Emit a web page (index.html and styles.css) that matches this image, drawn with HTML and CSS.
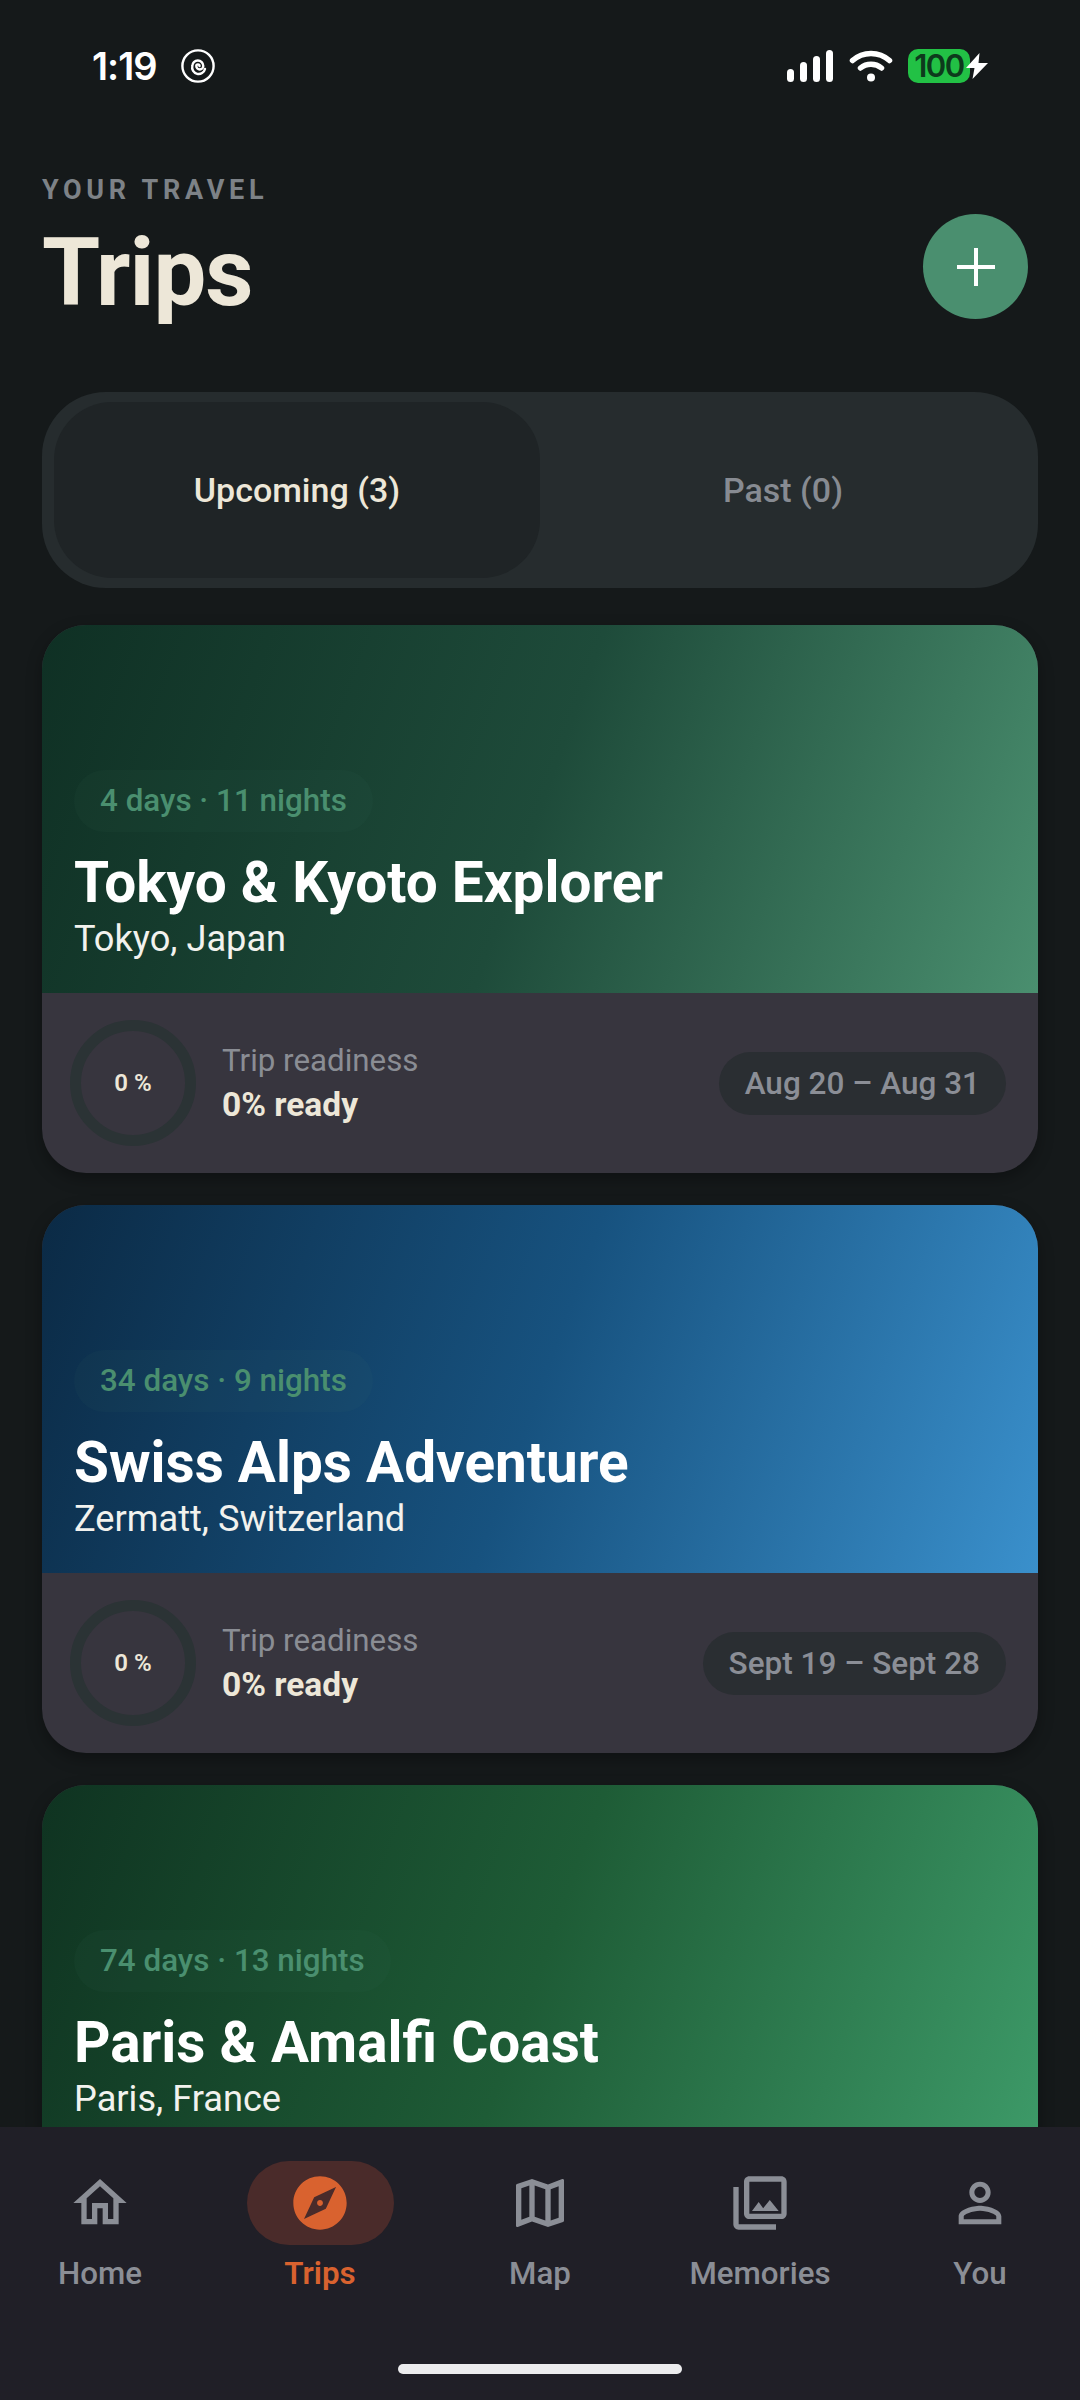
FILE: index.html
```html
<!DOCTYPE html>
<html lang="en">

<head>
  <meta charset="UTF-8" />
  <meta name="viewport" content="width=device-width, initial-scale=1.0" />
  <title>Trips</title>
  <link rel="stylesheet" href="styles.css">
</head>

<body>

  <div class="screen">
    <div class="status-bar">
      <div class="status-left">
        <span class="clock">1:19</span>
        <svg class="spiral" viewBox="0 0 34 34" fill="none" stroke="#fff" stroke-width="2.4" stroke-linecap="round">
          <circle cx="17" cy="17" r="15.6" />
          <path d="M18.5 17A1.6 1.6 0 0 0 15.300 17A3.500 3.500 0 0 0 22.300 17A5.500 5.500 0 0 0 11.300 17A6.400 6.400 0 0 0 24 20" />
        </svg>
      </div>
      <div class="status-right">
        <div class="signal">
          <span class="bar bar1"></span>
          <span class="bar bar2"></span>
          <span class="bar bar3"></span>
          <span class="bar bar4"></span>
        </div>
        <svg class="wifi" viewBox="0 0 44 32" fill="none" stroke="#fff" stroke-width="5.5" stroke-linecap="round">
          <path d="M3.500 10.500c10.500-9.500 26.500-9.500 37 0" />
          <path d="M11.500 18c6-5 15-5 21 0" />
          <circle cx="22" cy="27.500" r="4" fill="#fff" stroke="none" />
        </svg>
        <div class="battery">100</div>
        <svg class="bolt" viewBox="0 0 22 26">
          <path d="M13.500 0 0 15h8.500L6.500 26 22 10h-9.500z" fill="#fff" />
        </svg>
      </div>
    </div>

    <div class="page-header">
      <div>
        <p class="eyebrow">YOUR TRAVEL</p>
        <h1>Trips</h1>
      </div>
      <button class="add-btn">
        <svg viewBox="0 0 38 38" stroke="#fff" stroke-width="4">
          <path d="M19 0v38M0 19h38" />
        </svg>
      </button>
    </div>

    <div class="segment">
      <div class="segment-tab active">Upcoming (3)</div>
      <div class="segment-tab">Past (0)</div>
    </div>

    <div class="trip-list">
      <div class="trip-card">
        <div class="trip-hero hero-green">
          <span class="trip-length">4 days · 11 nights</span>
          <h2>Tokyo &amp; Kyoto Explorer</h2>
          <p>Tokyo, Japan</p>
        </div>
        <div class="trip-footer">
          <div class="ring">0 %</div>
          <div class="readiness">
            <span class="readiness-label">Trip readiness</span>
            <span class="readiness-value">0% ready</span>
          </div>
          <span class="date-pill">Aug 20 – Aug 31</span>
        </div>
      </div>

      <div class="trip-card">
        <div class="trip-hero hero-blue">
          <span class="trip-length">34 days · 9 nights</span>
          <h2>Swiss Alps Adventure</h2>
          <p>Zermatt, Switzerland</p>
        </div>
        <div class="trip-footer">
          <div class="ring">0 %</div>
          <div class="readiness">
            <span class="readiness-label">Trip readiness</span>
            <span class="readiness-value">0% ready</span>
          </div>
          <span class="date-pill">Sept 19 – Sept 28</span>
        </div>
      </div>

      <div class="trip-card">
        <div class="trip-hero hero-emerald">
          <span class="trip-length">74 days · 13 nights</span>
          <h2>Paris &amp; Amalfi Coast</h2>
          <p>Paris, France</p>
        </div>
        <div class="trip-footer">
          <div class="ring">0 %</div>
          <div class="readiness">
            <span class="readiness-label">Trip readiness</span>
            <span class="readiness-value">0% ready</span>
          </div>
          <span class="date-pill">Oct 2 – Oct 14</span>
        </div>
      </div>
    </div>

    <div class="tab-bar">
      <div class="tabs">
        <div class="tab">
          <div class="tab-icon">
            <svg viewBox="0 0 24 24"><path d="M12 5.690l5 4.500V18h-2v-6H9v6H7v-7.810l5-4.500M12 3L2 12h3v8h6v-6h2v6h6v-8h3L12 3z" /></svg>
          </div>
          <span>Home</span>
        </div>
        <div class="tab current">
          <div class="tab-icon">
            <svg viewBox="0 0 24 24"><path d="M12 10.900c-.61 0-1.100.49-1.100 1.100s.49 1.100 1.100 1.100c.61 0 1.100-.49 1.100-1.100s-.49-1.100-1.100-1.100zM12 2C6.480 2 2 6.480 2 12s4.480 10 10 10 10-4.480 10-10S17.520 2 12 2zm2.190 12.190L6 18l3.810-8.190L18 6l-3.810 8.190z" /></svg>
          </div>
          <span>Trips</span>
        </div>
        <div class="tab">
          <div class="tab-icon">
            <svg viewBox="0 0 24 24"><path d="M20.500 3l-.16.03L15 5.100 9 3 3.360 4.900c-.21.07-.36.25-.36.48V20.500c0 .28.22.5.5.5l.16-.03L9 18.900l6 2.100 5.640-1.900c.21-.07.36-.25.36-.48V3.500c0-.28-.22-.5-.5-.5zM10 5.470l4 1.400v11.660l-4-1.400V5.470zm-5 .99l3-1.010v11.700l-3 1.160V6.460zm14 11.080l-3 1.010V6.860l3-1.160v11.840z" /></svg>
          </div>
          <span>Map</span>
        </div>
        <div class="tab">
          <div class="tab-icon">
            <svg viewBox="0 0 24 24"><path d="M20 4v12H8V4h12m0-2H8c-1.100 0-2 .9-2 2v12c0 1.100.9 2 2 2h12c1.100 0 2-.9 2-2V4c0-1.100-.9-2-2-2zm-8.500 9.670l1.690 2.260 2.480-3.100L19 15H9zM2 6v14c0 1.100.9 2 2 2h14v-2H4V6H2z" /></svg>
          </div>
          <span>Memories</span>
        </div>
        <div class="tab">
          <div class="tab-icon">
            <svg viewBox="0 0 24 24"><path d="M12 5.900c1.160 0 2.100.94 2.100 2.100s-.94 2.100-2.100 2.100S9.900 9.160 9.900 8s.94-2.100 2.100-2.100m0 9c2.970 0 6.100 1.460 6.100 2.100v1.100H5.900V17c0-.64 3.130-2.100 6.100-2.100M12 4C9.790 4 8 5.790 8 8s1.790 4 4 4 4-1.790 4-4-1.790-4-4-4zm0 9c-2.670 0-8 1.340-8 4v3h16v-3c0-2.660-5.330-4-8-4z" /></svg>
          </div>
          <span>You</span>
        </div>
      </div>
      <div class="home-indicator"></div>
    </div>
  </div>

</body>

</html>
```

FILE: styles.css
```css
* {
  box-sizing: border-box;
}

body {
  font-family: Roboto, sans-serif;
  background: #15191a;
  margin: 0;
  padding: 0;
}

.screen {
  position: relative;
  width: 1080px;
  height: 2400px;
  overflow: hidden;
  background: #15191a;
}

/* status bar */
.status-bar {
  display: flex;
  justify-content: space-between;
  align-items: center;
  height: 84px;
  padding: 48px 92px 0 92px;
  color: #fff;
}

.status-left {
  display: flex;
  align-items: center;
  gap: 24px;
}

.clock {
  font-family: Inter, sans-serif;
  font-size: 38px;
  font-weight: 600;
  letter-spacing: -1px;
}

.spiral {
  width: 34px;
  height: 34px;
}

.status-right {
  display: flex;
  align-items: center;
}

.signal {
  display: flex;
  align-items: flex-end;
  gap: 6px;
  height: 32px;
  margin-right: 16px;
}

.bar {
  width: 7px;
  border-radius: 4px;
  background: #fff;
}

.bar1 { height: 13px; }
.bar2 { height: 20px; }
.bar3 { height: 26px; }
.bar4 { height: 32px; }

.wifi {
  width: 44px;
  height: 32px;
  margin-right: 15px;
}

.battery {
  width: 62px;
  height: 34px;
  line-height: 34px;
  border-radius: 10px;
  background: #22c145;
  color: #0d3a1c;
  font-family: Inter, sans-serif;
  font-size: 31px;
  font-weight: 600;
  letter-spacing: -1.5px;
  text-align: center;
  white-space: nowrap;
}

.bolt {
  width: 22px;
  height: 26px;
  margin-left: -4px;
}

/* title row */
.page-header {
  display: flex;
  justify-content: space-between;
  align-items: flex-end;
  padding: 90px 52px 0 42px;
}

.eyebrow {
  margin: 0;
  font-size: 27px;
  font-weight: 700;
  letter-spacing: 4.7px;
  line-height: 32px;
  color: #7d8287;
}

h1 {
  margin: 13px 0 0;
  font-size: 94px;
  font-weight: 700;
  line-height: 108px;
  letter-spacing: -1px;
  color: #ede7d8;
}

.add-btn {
  display: flex;
  align-items: center;
  justify-content: center;
  width: 105px;
  height: 105px;
  margin-bottom: 8px;
  padding: 0;
  border: none;
  border-radius: 50%;
  background: #4a8f6f;
}

.add-btn svg {
  width: 38px;
  height: 38px;
}

/* upcoming / past switch */
.segment {
  display: flex;
  height: 196px;
  margin: 65px 42px 0;
  padding: 10px 12px;
  border-radius: 64px;
  background: #262c2e;
}

.segment-tab {
  flex: 1;
  display: flex;
  align-items: center;
  justify-content: center;
  border-radius: 58px;
  font-size: 34px;
  font-weight: 500;
  color: #878b92;
}

.segment-tab.active {
  background: #1f2426;
  color: #ede7d8;
}

/* trip cards */
.trip-list {
  display: flex;
  flex-direction: column;
  gap: 32px;
  margin: 37px 42px 0;
}

.trip-card {
  border-radius: 44px;
  overflow: hidden;
  background: #37353e;
  box-shadow: 0 6px 16px rgba(0, 0, 0, 0.3);
}

.trip-hero {
  display: flex;
  flex-direction: column;
  align-items: flex-start;
  justify-content: flex-end;
  height: 368px;
  padding: 0 32px 33px;
}

.hero-green {
  background: linear-gradient(110deg, #0f3024, #1e4b3a 50%, #4a8f6f);
}

.hero-blue {
  background: linear-gradient(110deg, #0b2a45, #17527f 50%, #3a90cc);
}

.hero-emerald {
  background: linear-gradient(110deg, #0f3321, #1e5c36 50%, #3d9a68);
}

.trip-length {
  padding: 0 26px;
  height: 62px;
  line-height: 62px;
  border-radius: 31px;
  background: rgba(74, 143, 111, 0.05);
  color: #4a8f6f;
  font-size: 31.4px;
  font-weight: 500;
}

.trip-hero h2 {
  margin: 17px 0 0;
  font-size: 56.7px;
  font-weight: 700;
  line-height: 68px;
  color: #fff;
}

.trip-hero p {
  margin: 0;
  font-size: 36.2px;
  line-height: 43px;
  color: #f2f2ee;
}

.trip-footer {
  display: flex;
  align-items: center;
  height: 180px;
  padding: 0 32px 0 28px;
}

.ring {
  display: flex;
  align-items: center;
  justify-content: center;
  flex-shrink: 0;
  width: 126px;
  height: 126px;
  border: 11px solid #2b3335;
  border-radius: 50%;
  color: #ede7d8;
  font-size: 24px;
  font-weight: 600;
}

.readiness {
  display: flex;
  flex-direction: column;
  flex-grow: 1;
  margin-left: 26px;
}

.readiness-label {
  font-size: 31.3px;
  line-height: 44px;
  color: #8a8d94;
}

.readiness-value {
  font-size: 33.5px;
  font-weight: 700;
  line-height: 44px;
  color: #ede7d8;
}

.date-pill {
  height: 63px;
  padding: 0 26px;
  line-height: 63px;
  border-radius: 32px;
  background: #2a2e32;
  color: #8b8e96;
  font-size: 31.5px;
  font-weight: 500;
}

/* bottom navigation */
.tab-bar {
  position: absolute;
  left: 0;
  bottom: 0;
  width: 100%;
  height: 273px;
  background: #201f27;
}

.tabs {
  display: grid;
  grid-template-columns: repeat(5, 220px);
  margin: 34px -10px 0;
}

.tab {
  display: flex;
  flex-direction: column;
  align-items: center;
  color: #8b8e96;
  font-size: 31.3px;
  font-weight: 500;
}

.tab-icon {
  display: flex;
  align-items: center;
  justify-content: center;
  width: 147px;
  height: 84px;
  margin-bottom: 10px;
  border-radius: 42px;
}

.tab-icon svg {
  width: 64px;
  height: 64px;
  fill: #8b8e96;
}

.tab.current {
  color: #d9622f;
  font-weight: 600;
}

.tab.current .tab-icon {
  background: #4a2b2a;
}

.tab.current .tab-icon svg {
  fill: #d9622f;
}

.home-indicator {
  position: absolute;
  left: 398px;
  bottom: 26px;
  width: 284px;
  height: 10px;
  border-radius: 5px;
  background: #ececee;
}
```
